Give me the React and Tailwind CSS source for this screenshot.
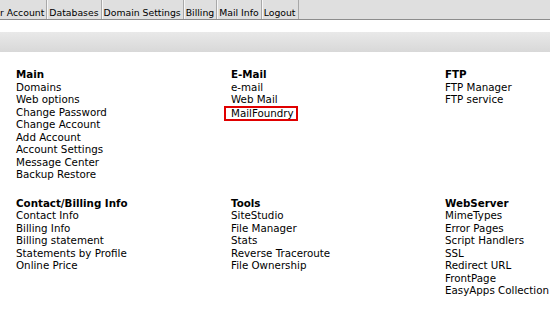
import React from 'react';

const tabs = ['r Account', 'Databases', 'Domain Settings', 'Billing', 'Mail Info', 'Logout'];

const sections = [
  { title: 'Main', items: ['Domains', 'Web options', 'Change Password', 'Change Account', 'Add Account', 'Account Settings', 'Message Center', 'Backup Restore'] },
  { title: 'E-Mail', items: ['e-mail', 'Web Mail', 'MailFoundry'] },
  { title: 'FTP', items: ['FTP Manager', 'FTP service'] },
  { title: 'Contact/Billing Info', items: ['Contact Info', 'Billing Info', 'Billing statement', 'Statements by Profile', 'Online Price'] },
  { title: 'Tools', items: ['SiteStudio', 'File Manager', 'Stats', 'Reverse Traceroute', 'File Ownership'] },
  { title: 'WebServer', items: ['MimeTypes', 'Error Pages', 'Script Handlers', 'SSL', 'Redirect URL', 'FrontPage', 'EasyApps Collection'] },
];

const Section = ({ title, items }) => (
  <div className="flex flex-col">
    <div className="font-bold">{title}</div>
    {items.map((item) => (
      <div key={item}>
        {item === 'MailFoundry' ? (
          <span className="-ml-[7px] inline-block border-2 border-[#e00000] pl-[5px] pr-[2px] leading-[11px]">{item}</span>
        ) : (
          item
        )}
      </div>
    ))}
  </div>
);

const App = () => {
  return (
    <div className="w-[550px] h-[312px] overflow-hidden bg-white text-black font-['DejaVu_Sans',sans-serif]">
      {/* top tabs */}
      <div className="h-[20px] bg-[#dfdfdf] border-b border-[#8c8c8c] overflow-hidden">
        <div className="flex h-full text-[9.3px] leading-[19px]">
          {tabs.map((tab, i) => (
            <div
              key={tab}
              className={`${i === 0 ? 'pl-0 pr-[2px]' : 'px-[2px] shadow-[inset_1px_0_0_#f6f6f6]'} pt-[3px] border-r border-[#a8a8a8] whitespace-nowrap`}
            >
              {tab}
            </div>
          ))}
        </div>
      </div>

      {/* gray band */}
      <div className="mt-[12px] h-[20px] bg-gradient-to-b from-[#e9e9e9] to-[#d8d8d8]" />

      <div className="pl-[16px] pt-[16px] text-[10.3px] leading-[12.5px] grid grid-cols-[215px_214px_105px] gap-y-[16px]">
        {sections.map((s) => (
          <Section key={s.title} {...s} />
        ))}
      </div>
    </div>
  );
};

export default App;
